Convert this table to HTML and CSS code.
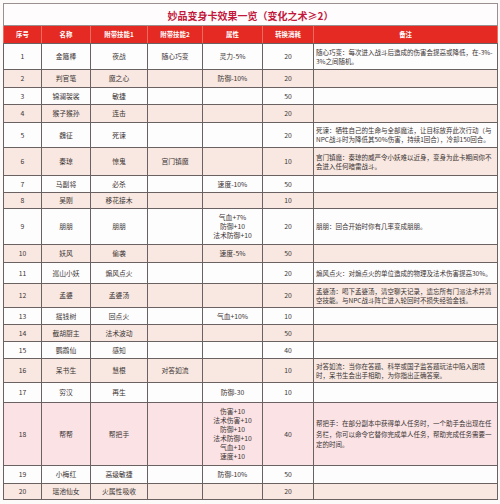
FILE: index.html
```html
<!DOCTYPE html>
<html lang="zh-CN">
<head>
<meta charset="utf-8">
<link rel="stylesheet" href="styles.css">
</head>
<body>
<table class="sheet">
  <colgroup>
    <col class="c-no"><col class="c-name"><col class="c-s1"><col class="c-s2"><col class="c-attr"><col class="c-cost"><col class="c-note">
  </colgroup>
  <tr class="title-row"><td colspan="7" class="title">妙品变身卡效果一览（变化之术≥2）</td></tr>
  <tr class="head h18"><th>序号</th><th>名称</th><th>附带技能1</th><th>附带技能2</th><th>属性</th><th>转换消耗</th><th>备注</th></tr>
  <tr class="w h26"><td>1</td><td>金箍棒</td><td>夜战</td><td>随心巧变</td><td>灵力-5%</td><td>20</td><td class="note">随心巧变：每次进入战斗后造成的伤害会提高或降低，在-3%-3%之间随机。</td></tr>
  <tr class="p h18"><td>2</td><td>判官笔</td><td>魔之心</td><td></td><td>防御-10%</td><td>20</td><td class="note"></td></tr>
  <tr class="w h17"><td>3</td><td>锦澜袈裟</td><td>敏捷</td><td></td><td></td><td>50</td><td class="note"></td></tr>
  <tr class="p h18"><td>4</td><td>猴子猴孙</td><td>连击</td><td></td><td></td><td>20</td><td class="note"></td></tr>
  <tr class="w h25"><td>5</td><td>魏征</td><td>死谏</td><td></td><td></td><td>20</td><td class="note">死谏：牺牲自己的生命与全部魔法，让目标放弃此次行动（与NPC战斗时为降低其50%伤害，持续1回合），冷却150回合。</td></tr>
  <tr class="p h28"><td>6</td><td>秦琼</td><td>惊鬼</td><td>宫门镇魔</td><td></td><td>10</td><td class="note">宫门镇魔：秦琼的威严令小妖难以近身，变身为此卡期间你不会进入任何暗雷战斗。</td></tr>
  <tr class="w h17"><td>7</td><td>马副将</td><td>必杀</td><td></td><td>速度-10%</td><td>50</td><td class="note"></td></tr>
  <tr class="p h16"><td>8</td><td>吴刚</td><td>移花接木</td><td></td><td></td><td>10</td><td class="note"></td></tr>
  <tr class="w h36"><td>9</td><td>朋朋</td><td>朋朋</td><td></td><td>气血+7%<br>防御+10<br>法术防御+10</td><td>20</td><td class="note">朋朋：回合开始时你有几率变成朋朋。</td></tr>
  <tr class="p h18"><td>10</td><td>妖风</td><td>偷袭</td><td></td><td>速度-5%</td><td>50</td><td class="note"></td></tr>
  <tr class="w h21"><td>11</td><td>巡山小妖</td><td>煽风点火</td><td></td><td></td><td>20</td><td class="note">煽风点火：对煽点火的单位造成的物理及法术伤害提高30%。</td></tr>
  <tr class="p h24"><td>12</td><td>孟婆</td><td>孟婆汤</td><td></td><td></td><td>20</td><td class="note">孟婆汤：喝下孟婆汤，清空聊天记录，遗忘所有门派法术并清空技能。与NPC战斗阵亡进入轮回时不损失经验金钱。</td></tr>
  <tr class="w h17"><td>13</td><td>摇钱树</td><td>回点火</td><td></td><td>气血+10%</td><td>10</td><td class="note"></td></tr>
  <tr class="p h17"><td>14</td><td>截胡厨主</td><td>法术波动</td><td></td><td></td><td>50</td><td class="note"></td></tr>
  <tr class="w h17"><td>15</td><td>鹦鹉仙</td><td>感知</td><td></td><td></td><td>40</td><td class="note"></td></tr>
  <tr class="p h24"><td>16</td><td>呆书生</td><td>慧根</td><td>对答如流</td><td></td><td>10</td><td class="note">对答如流：当你在答题、科举或国子监答题玩法中陷入困境时，呆书生会出手相助，为你指出正确答案。</td></tr>
  <tr class="w h20"><td>17</td><td>穷汉</td><td>再生</td><td></td><td>防御-30</td><td>10</td><td class="note"></td></tr>
  <tr class="k h63"><td>18</td><td>帮帮</td><td>帮把手</td><td></td><td>伤害+10<br>法术伤害+10<br>防御+10<br>法术防御+10<br>气血+10<br>速度+10</td><td>40</td><td class="note wide">帮把手：在部分副本中获得单人任务时，一个助手会出现在任务栏，你可以命令它替你完成单人任务，帮助完成任务需要一定的时间。</td></tr>
  <tr class="w h18"><td>19</td><td>小梅红</td><td>高级敏捷</td><td></td><td>防御-10%</td><td>50</td><td class="note"></td></tr>
  <tr class="p h16"><td>20</td><td>瑶池仙女</td><td>火属性吸收</td><td></td><td></td><td>20</td><td class="note"></td></tr>
</table>
</body>
</html>
```

FILE: styles.css
```css
html, body {
  margin: 0;
  padding: 0;
  background: #fdfbfa;
}
body {
  width: 500px;
  height: 504px;
  overflow: hidden;
  font-family: "Noto Sans CJK SC", "Noto Sans", sans-serif;
}
.sheet {
  margin: 3px 0 0 3px;
  width: 494px;
  border-collapse: collapse;
  table-layout: fixed;
  font-size: 6.8px;
  line-height: 9px;
  color: #3a3333;
}
.c-no { width: 38px; }
.c-name { width: 49px; }
.c-s1 { width: 57px; }
.c-s2 { width: 55px; }
.c-attr { width: 60px; }
.c-cost { width: 51px; }
.c-note { width: 184px; }

.sheet td, .sheet th {
  border: 1px solid #6a6262;
  padding: 0 2px;
  text-align: center;
  vertical-align: middle;
  box-sizing: border-box;
  overflow: hidden;
}
.title-row td.title {
  height: 22px;
  background: #fefcfc;
  color: #c2183c;
  font-size: 10px;
  font-weight: 700;
  line-height: 14px;
  border-color: #9a9090;
  padding-top: 2px;
}
.head th {
  background: #e42a22;
  color: #ffffff;
  font-weight: 700;
  font-size: 6.4px;
  border-color: #e42a22 #f06a5e #6a6262 #f06a5e;
}
.w td { background: #fefdfd; }
.p td { background: #f8e8e1; }
.k td { background: #fbe3e5; }
.sheet td.note {
  text-align: left;
  font-size: 6.5px;
  padding: 0 1px 0 2px;
  word-break: break-all;
}
.sheet td.wide { line-height: 10.5px; }

.h16 td, .h16 th { height: 16px; }
.h17 td, .h17 th { height: 17px; }
.h18 td, .h18 th { height: 18px; }
.h20 td { height: 20px; }
.h21 td { height: 21px; }
.h24 td { height: 24px; }
.h25 td { height: 25px; }
.h26 td { height: 26px; }
.h28 td { height: 28px; }
.h36 td { height: 36px; }
.h63 td { height: 63px; }
```
